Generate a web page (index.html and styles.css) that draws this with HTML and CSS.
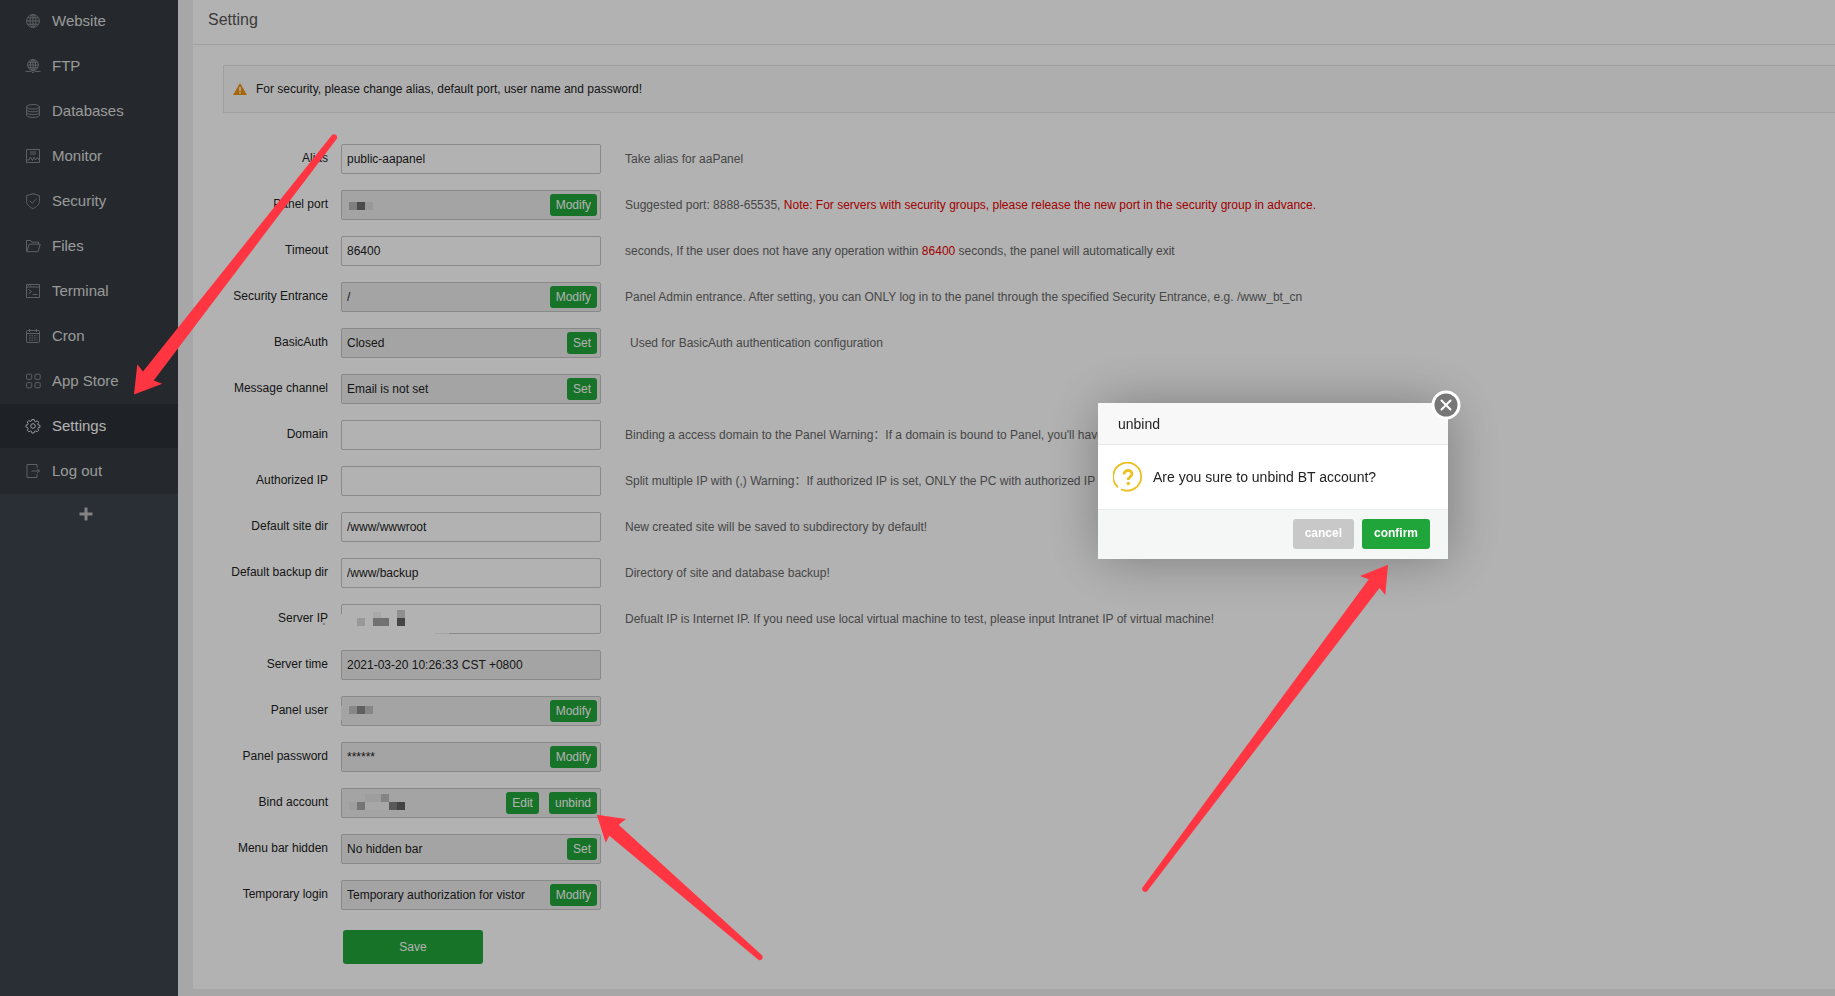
FILE: index.html
```
<!DOCTYPE html>
<html lang="en">
<head>
    <meta charset="UTF-8">
    <meta name="viewport" content="width=device-width, initial-scale=1.0">
    <title>Setting</title>
    <link rel="stylesheet" href="styles.css">
</head>
<body>
    <div class="layout">
        <!-- Sidebar -->
        <nav class="sidebar">
            <ul class="menu">
                <li><a href="#"><svg class="icon" viewBox="0 0 14 14"><circle cx="7" cy="7" r="6.4"/><ellipse cx="7" cy="7" rx="3" ry="6.4"/><path d="M7 .6v12.8M.6 7h12.8M1.6 3.8h10.8M1.6 10.2h10.8"/></svg>Website</a></li>
                <li><a href="#"><svg class="icon" viewBox="0 0 14 14"><circle cx="7" cy="6" r="5.4"/><ellipse cx="7" cy="6" rx="2.6" ry="5.4"/><path d="M7 .6v10.8M1.6 6h10.8M2.4 3.3h9.2M2.4 8.7h9.2M-.5 12.4h5.500M9 12.4h5.500"/><circle cx="7" cy="12.4" r="1.2"/></svg>FTP</a></li>
                <li><a href="#"><svg class="icon" viewBox="0 0 14 14"><ellipse cx="7" cy="2.8" rx="6.4" ry="2.3"/><path d="M.6 2.8v8.4c0 3 12.8 3 12.8 0V2.8M.6 5.6c0 3 12.8 3 12.8 0M.6 8.4c0 3 12.8 3 12.8 0"/></svg>Databases</a></li>
                <li><a href="#"><svg class="icon" viewBox="0 0 14 14"><path d="M.5.5h13v13H.5zM4 3h6M4 5h6M1 11h2l1.5-3 2 3.5L8 8l1.5 3 2-2.5L13 11"/></svg>Monitor</a></li>
                <li><a href="#"><svg class="icon" viewBox="0 0 14 14"><path d="M7-.3 13.4 1.6v5.6c0 3.4-3 5.8-6.4 7.4C3.600 13 .6 10.600.6 7.200V1.600zM3.800 6.800l2.400 2.400 4.300-4.300"/></svg>Security</a></li>
                <li><a href="#"><svg class="icon" viewBox="0 0 14 14"><path d="M.5 12.500V1.500h4.200l1.200 1.700h6.600v2M.7 12.700 3.300 5.200h10.900l-2.100 7.500z"/></svg>Files</a></li>
                <li><a href="#"><svg class="icon" viewBox="0 0 14 14"><path d="M.5.5h13v13H.5zM.5 3h13M2.500 5.500l3 2.200-3 2.300M6.500 10.500h5M2 1.800h1M4 1.800h1"/></svg>Terminal</a></li>
                <li><a href="#"><svg class="icon" viewBox="0 0 14 14"><rect x=".5" y="1.500" width="13" height="12" rx="1"/><path d="M.5 4.500h13M3.500 0v3M10.500 0v3"/><path stroke-dasharray="1.500 1" d="M3 6.800h8.500M3 9h8.500M3 11.200h8.500"/></svg>Cron</a></li>
                <li><a href="#"><svg class="icon" viewBox="0 0 14 14"><rect x=".5" y=".2" width="5.200" height="5.200" rx="1"/><rect x="9" y=".2" width="5.200" height="5.200" rx="1"/><rect x=".5" y="8.600" width="5.200" height="5.200" rx="1"/><rect x="9" y="8.600" width="5.200" height="5.200" rx="1"/></svg>App Store</a></li>
                <li><a href="#" class="active"><svg class="icon" viewBox="0 0 14 14"><path d="M5.900.5h2.200l.4 1.700 1.200.5 1.500-.9 1.500 1.500-.9 1.500.5 1.200 1.700.4v1.800l-1.700.4-.5 1.200.9 1.500-1.500 1.500-1.500-.9-1.200.5-.4 1.600H5.900l-.4-1.600-1.200-.5-1.500.9-1.500-1.500.9-1.500-.5-1.200L0 7.900V6.100l1.700-.4.5-1.200-.9-1.500 1.500-1.500 1.500.9 1.200-.5z"/><circle cx="7" cy="7" r="2.300"/></svg>Settings</a></li>
                <li><a href="#"><svg class="icon" viewBox="0 0 14 14"><path d="M11 4V.5H1v13h10V10M5.500 7h8M11 4.800 13.500 7 11 9.200"/></svg>Log out</a></li>
            </ul>
            <button class="menu-add" type="button" aria-label="Add menu">
                <svg width="14" height="14" viewBox="0 0 14 14"><path d="M7 .5v13M.5 7h13"/></svg>
            </button>
        </nav>

        <!-- Content -->
        <main class="content">
            <div class="panel">
                <h1>Setting</h1>
                <div class="notice">
                    <svg width="14" height="12" viewBox="0 0 14 12"><path fill="#f0930f" d="M7 0l7 12H0z"/><path stroke="#fff" stroke-width="1.600" d="M7 4v4M7 9v1.500"/></svg>
                    For security, please change alias, default port, user name and password!
                </div>

                <form class="settings">
                    <div class="line">
                        <label for="alias">Alias</label>
                        <div class="field"><input type="text" id="alias" value="public-aapanel"></div>
                        <span class="hint">Take alias for aaPanel</span>
                    </div>
                    <div class="line">
                        <label for="port">Panel port</label>
                        <div class="field disabled">
                            <input type="text" id="port" readonly>
                            <svg class="mosaic" viewBox="0 0 120 30"><path fill="#b6b6b6" d="M8 12h8v8H8z"/><path fill="#6c6c6c" d="M16 12h8v8h-8z"/><path fill="#dcdcdc" d="M24 12h8v8h-8z"/></svg>
                            <button type="button">Modify</button>
                        </div>
                        <span class="hint">Suggested port: 8888-65535, <b>Note: For servers with security groups, please release the new port in the security group in advance.</b></span>
                    </div>
                    <div class="line">
                        <label for="timeout">Timeout</label>
                        <div class="field"><input type="text" id="timeout" value="86400"></div>
                        <span class="hint">seconds, If the user does not have any operation within <b>86400</b> seconds, the panel will automatically exit</span>
                    </div>
                    <div class="line">
                        <label for="entrance">Security Entrance</label>
                        <div class="field disabled"><input type="text" id="entrance" value="/" readonly><button type="button">Modify</button></div>
                        <span class="hint">Panel Admin entrance. After setting, you can ONLY log in to the panel through the specified Security Entrance, e.g. /www_bt_cn</span>
                    </div>
                    <div class="line">
                        <label for="basicauth">BasicAuth</label>
                        <div class="field disabled"><input type="text" id="basicauth" value="Closed" readonly><button type="button">Set</button></div>
                        <span class="hint indent">Used for BasicAuth authentication configuration</span>
                    </div>
                    <div class="line">
                        <label for="channel">Message channel</label>
                        <div class="field disabled"><input type="text" id="channel" value="Email is not set" readonly><button type="button">Set</button></div>
                    </div>
                    <div class="line">
                        <label for="domain">Domain</label>
                        <div class="field"><input type="text" id="domain"></div>
                        <span class="hint">Binding a access domain to the Panel Warning：If a domain is bound to Panel, you'll have</span>
                    </div>
                    <div class="line">
                        <label for="authip">Authorized IP</label>
                        <div class="field"><input type="text" id="authip"></div>
                        <span class="hint">Split multiple IP with (,) Warning：If authorized IP is set, ONLY the PC with authorized IP</span>
                    </div>
                    <div class="line">
                        <label for="sitedir">Default site dir</label>
                        <div class="field"><input type="text" id="sitedir" value="/www/wwwroot"></div>
                        <span class="hint">New created site will be saved to subdirectory by default!</span>
                    </div>
                    <div class="line">
                        <label for="backupdir">Default backup dir</label>
                        <div class="field"><input type="text" id="backupdir" value="/www/backup"></div>
                        <span class="hint">Directory of site and database backup!</span>
                    </div>
                    <div class="line">
                        <label for="serverip">Server IP</label>
                        <div class="field">
                            <input type="text" id="serverip">
                            <svg class="mosaic" viewBox="0 0 120 30"><path fill="#fff" d="M-2 10H94v22H-2z"/><path fill="#fff" opacity=".7" d="M94 28h14v4H94z"/><path fill="#dcdcdc" d="M16 14h8v8h-8z"/><path fill="#f2f2f2" d="M32 8h8v6h-8z"/><path fill="#a2a2a2" d="M32 14h16v8H32z"/><path fill="#cdcdcd" d="M56 6h8v8h-8z"/><path fill="#626262" d="M56 14h8v8h-8z"/><path stroke="#777" d="M-17 19v2"/></svg>
                        </div>
                        <span class="hint">Defualt IP is Internet IP. If you need use local virtual machine to test, please input Intranet IP of virtual machine!</span>
                    </div>
                    <div class="line">
                        <label for="servertime">Server time</label>
                        <div class="field disabled"><input type="text" id="servertime" value="2021-03-20 10:26:33 CST +0800" readonly></div>
                    </div>
                    <div class="line">
                        <label for="user">Panel user</label>
                        <div class="field disabled">
                            <input type="text" id="user" readonly>
                            <svg class="mosaic" viewBox="0 0 120 30"><path fill="#ededed" d="M0 10h1v14H0z"/><path fill="#c2c2c2" d="M8 10h8v8H8z"/><path fill="#8a8a8a" d="M16 10h8v8h-8z"/><path fill="#c0c0c0" d="M24 10h8v8h-8z"/></svg>
                            <button type="button">Modify</button>
                        </div>
                    </div>
                    <div class="line">
                        <label for="password">Panel password</label>
                        <div class="field disabled"><input type="text" id="password" value="******" readonly><button type="button">Modify</button></div>
                    </div>
                    <div class="line">
                        <label for="account">Bind account</label>
                        <div class="field disabled">
                            <input type="text" id="account" readonly>
                            <svg class="mosaic" viewBox="0 0 120 30"><path fill="#e2e2e2" d="M8 14h8v8H8zM24 6h16v8H24z"/><path fill="#a8a8a8" d="M16 14h8v8h-8z"/><path fill="#f0f0f0" d="M24 14h24v8H24z"/><path fill="#bebebe" d="M40 6h8v8h-8z"/><path fill="#808080" d="M48 14h8v8h-8z"/><path fill="#606060" d="M56 14h8v8h-8z"/></svg>
                            <button type="button">Edit</button><button type="button">unbind</button>
                        </div>
                    </div>
                    <div class="line">
                        <label for="menubar">Menu bar hidden</label>
                        <div class="field disabled"><input type="text" id="menubar" value="No hidden bar" readonly><button type="button">Set</button></div>
                    </div>
                    <div class="line">
                        <label for="templogin">Temporary login</label>
                        <div class="field disabled"><input type="text" id="templogin" value="Temporary authorization for vistor" readonly><button type="button">Modify</button></div>
                    </div>
                    <button class="save" type="button">Save</button>
                </form>
            </div>
        </main>
    </div>

    <div class="shade"></div>

    <!-- Unbind dialog -->
    <div class="dialog" role="dialog" aria-labelledby="dialog-title">
        <h2 id="dialog-title">unbind</h2>
        <button class="close" type="button" aria-label="Close">
            <svg width="30" height="30" viewBox="0 0 30 30"><circle cx="15" cy="15" r="13" fill="#777" stroke="#fff" stroke-width="3"/><path stroke="#fff" stroke-width="2" stroke-linecap="round" d="M10.500 10.500l9 9M19.500 10.500l-9 9"/></svg>
        </button>
        <div class="dialog-body">
            <svg width="30" height="30" viewBox="0 0 30 30" fill="none" stroke="#ecc022"><path stroke-width="1.800" d="M5 25.200A14 14 0 1 1 8 27.200"/><path stroke-width="2.800" d="M11 12.500c0-5.400 8.200-5.100 8-.5-.1 2.800-3.800 3-3.800 6"/><circle cx="15.200" cy="21.500" r="1.700" fill="#ecc022" stroke="none"/></svg>
            <p>Are you sure to unbind BT account?</p>
        </div>
        <div class="dialog-foot">
            <button class="cancel" type="button">cancel</button>
            <button class="confirm" type="button">confirm</button>
        </div>
    </div>

    <!-- Red guide arrows -->
    <svg class="arrows">
        <path d="M134 394.500 137.300 364.300 143 371.500 331.600 135.500A3 3 0 0 1 336.400 139.200L153.700 380.500 162.300 383.700z"/>
        <path d="M596.800 814.700 626 819 618.600 824.700 762 955.200A3 3 0 0 1 758 959.600L609.300 835.700 605.700 842.700z"/>
        <path d="M1388 564.700 1360 576 1368.800 579.300 1142.500 887.500A3 3 0 0 0 1147.300 891L1379.500 588 1385.300 595z"/>
    </svg>
</body>
</html>
```
FILE: styles.css
```
* {
    box-sizing: border-box;
}
body {
    margin: 0;
    font-family: "Liberation Sans", Arial, "Noto Sans CJK SC", sans-serif;
    font-size: 12px;
    color: #222;
    background: #f0f0f0;
}
button, input {
    font-family: inherit;
    font-size: 12px;
}
button {
    border: none;
    border-radius: 3px;
    background: #20a53a;
    color: #fff;
    cursor: pointer;
}
.layout {
    display: flex;
    min-height: 100vh;
    overflow: hidden;
}

/* Sidebar */
.sidebar {
    flex: none;
    width: 178px;
    background: #3d434d;
}
.menu {
    list-style: none;
    margin: -1px 0 0;
    padding: 0;
    background: #353c41;
}
.menu li {
    padding-bottom: 1px;
}
.menu a {
    display: flex;
    align-items: center;
    gap: 12px;
    height: 44px;
    padding: 0 0 2px 26px;
    font-size: 15px;
    color: #dcdcdc;
    text-decoration: none;
}
.menu .active {
    background: #2b3036;
    color: #fff;
}
.icon {
    width: 14px;
    height: 14px;
    margin-top: 2px;
    overflow: visible;
    fill: none;
    stroke: #868b8e;
    stroke-width: 1;
}
.active .icon {
    stroke: #dcdcdc;
}
.menu-add {
    display: block;
    width: 100%;
    height: 38px;
    padding: 4px 7px 0 0;
    background: none;
}
.menu-add svg {
    stroke: #bbb;
    stroke-width: 3;
}

/* Settings panel */
.content {
    flex: 1;
    min-width: 0;
    padding: 0 0 7px 15px;
}
.panel {
    min-height: 100%;
    background: #fff;
}
h1 {
    margin: 0;
    height: 45px;
    padding-left: 15px;
    border-bottom: 1px solid #e4e4e4;
    font-size: 16px;
    font-weight: normal;
    line-height: 40px;
    color: #555;
}
.notice {
    display: flex;
    align-items: center;
    gap: 9px;
    height: 48px;
    margin: 20px 0 31px 30px;
    padding-left: 9px;
    border: 1px solid #e6e6e6;
    border-right: none;
    background: #fafafa;
}
.settings {
    display: flex;
    flex-direction: column;
    gap: 16px;
    padding: 0 0 25px 30px;
}
.line {
    display: flex;
    height: 30px;
    white-space: nowrap;
}
.line label {
    width: 105px;
    margin-right: 13px;
    line-height: 28px;
    text-align: right;
}
.field {
    position: relative;
    display: flex;
    align-items: center;
    gap: 10px;
    width: 260px;
    padding-right: 3px;
    border: 1px solid #c4c4c4;
    border-radius: 2px;
}
.field input {
    flex: 1;
    min-width: 0;
    height: 28px;
    margin-right: -10px;
    padding: 0 5px;
    border: none;
    outline: none;
    background: none;
    color: #222;
}
.field.disabled {
    background: #ebebeb;
}
.field button {
    height: 22px;
    padding: 0 6px;
}
.mosaic {
    position: absolute;
    left: -1px;
    top: -1px;
    width: 120px;
    height: 30px;
    overflow: visible;
}
.hint {
    margin-left: 24px;
    line-height: 30px;
    color: #666;
}
.hint.indent {
    padding-left: 5px;
}
.hint b {
    font-weight: normal;
    color: #e60000;
}
.save {
    width: 140px;
    height: 34px;
    margin: 4px 0 0 120px;
}

/* Dialog */
.shade {
    position: fixed;
    inset: 0;
    background: rgba(0, 0, 0, 0.3);
}
.dialog {
    position: fixed;
    top: 403px;
    right: 387px;
    width: 350px;
    background: #fff;
    box-shadow: 1px 1px 50px rgba(0, 0, 0, 0.3);
}
.dialog h2 {
    margin: 0;
    height: 42px;
    padding-left: 20px;
    border-bottom: 1px solid #e8e8e8;
    background: #f8f8f8;
    font-size: 14px;
    font-weight: normal;
    line-height: 42px;
}
.close {
    position: absolute;
    top: -13px;
    right: -13px;
    padding: 0;
    background: none;
}
.close svg {
    display: block;
}
.dialog-body {
    display: flex;
    align-items: center;
    gap: 10px;
    height: 64px;
    padding-left: 15px;
    font-size: 14px;
}
.dialog-body p {
    margin: 0;
}
.dialog-foot {
    display: flex;
    justify-content: flex-end;
    gap: 8px;
    padding: 9px 18px 10px;
    border-top: 1px solid #e8ecec;
    background: #f5f7f7;
}
.dialog-foot button {
    height: 30px;
    padding: 0 12px 2px;
    font-weight: bold;
}
.dialog-foot .cancel {
    background: #c8c8c8;
}

.arrows {
    position: absolute;
    top: 0;
    left: 0;
    width: 100%;
    height: 100%;
    fill: #ff3541;
    pointer-events: none;
}
```
